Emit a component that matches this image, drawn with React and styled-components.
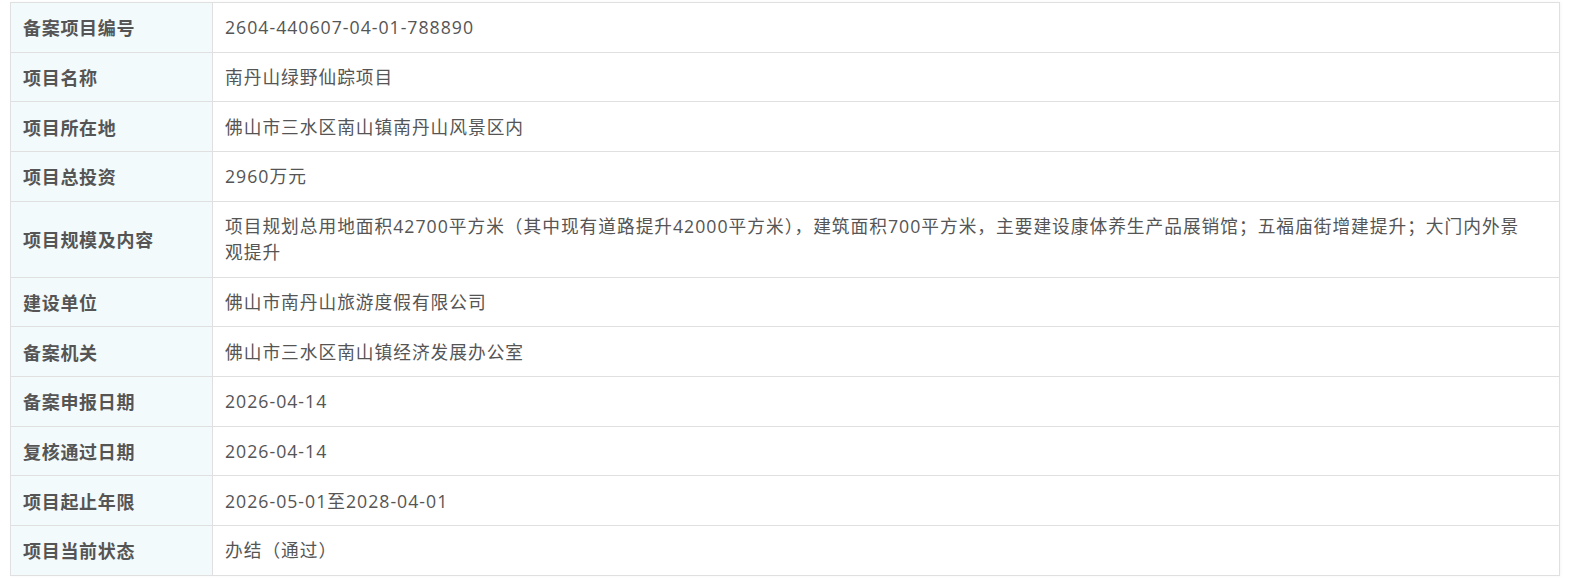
import styled, { createGlobalStyle } from "styled-components";

const GlobalStyle = createGlobalStyle`
  body {
    margin: 0;
    background: #ffffff;
    font-family: "Open Sans", "Noto Sans CJK SC", sans-serif;
  }
`;

const Wrapper = styled.div`
  padding: 2px 29px 8px 10px;
`;

const Table = styled.table`
  width: 1550px;
  border-collapse: collapse;
  table-layout: fixed;
  box-shadow: 1px 0 3px rgba(0, 0, 0, 0.04);
`;

const Label = styled.th`
  width: 177px;
  padding: 11.2px 12px;
  background: #f3fafb;
  border: 1px solid #e0e0e0;
  color: #555;
  font-family: "Noto Sans CJK SC", sans-serif;
  font-size: 18px;
  font-weight: 700;
  line-height: 26.3px;
  letter-spacing: 0.7px;
  text-align: left;
  vertical-align: middle;
`;

const Value = styled.td`
  padding: 11.2px 30px 11.2px 12px;
  border: 1px solid #e0e0e0;
  color: #555;
  font-size: 17.7px;
  line-height: 26.3px;
  letter-spacing: 1px;
  vertical-align: middle;
`;

const rows = [
  ["备案项目编号", "2604-440607-04-01-788890"],
  ["项目名称", "南丹山绿野仙踪项目"],
  ["项目所在地", "佛山市三水区南山镇南丹山风景区内"],
  ["项目总投资", "2960万元"],
  [
    "项目规模及内容",
    "项目规划总用地面积42700平方米（其中现有道路提升42000平方米），建筑面积700平方米，主要建设康体养生产品展销馆；五福庙街增建提升；大门内外景观提升",
  ],
  ["建设单位", "佛山市南丹山旅游度假有限公司"],
  ["备案机关", "佛山市三水区南山镇经济发展办公室"],
  ["备案申报日期", "2026-04-14"],
  ["复核通过日期", "2026-04-14"],
  ["项目起止年限", "2026-05-01至2028-04-01"],
  ["项目当前状态", "办结（通过）"],
];

const App = () => {
  return (
    <Wrapper>
      <GlobalStyle />
      <Table>
        <tbody>
          {rows.map(([label, value]) => (
            <tr key={label}>
              <Label>{label}</Label>
              <Value>{value}</Value>
            </tr>
          ))}
        </tbody>
      </Table>
    </Wrapper>
  );
};

export default App;
